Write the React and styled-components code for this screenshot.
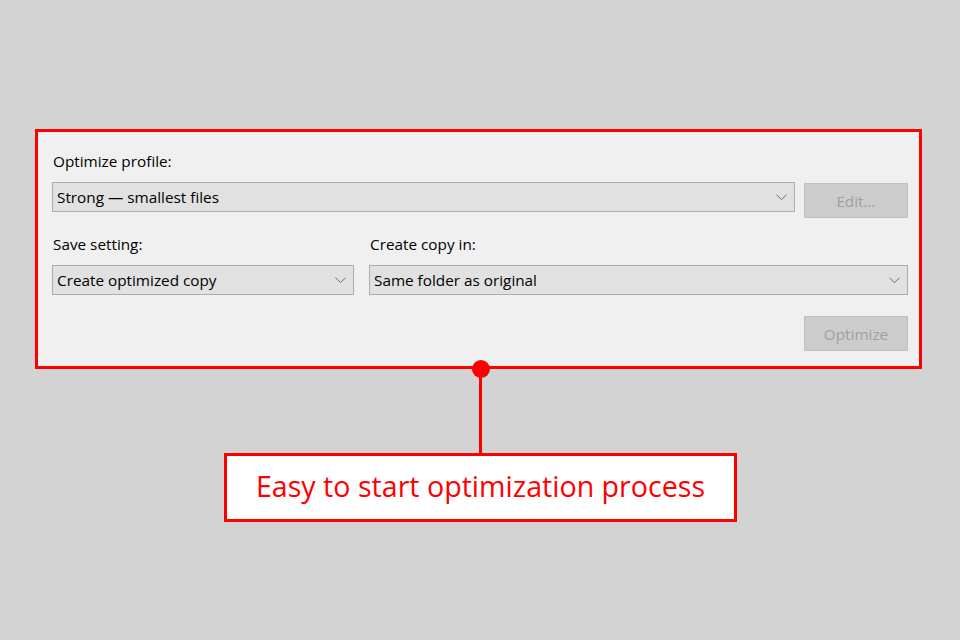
import React from "react";
import styled, { createGlobalStyle } from "styled-components";

const GlobalStyle = createGlobalStyle`
  html, body {
    margin: 0;
    padding: 0;
    background: #d3d3d3;
  }
  * {
    box-sizing: border-box;
  }
`;

const Chevron = () => (
  <svg width="11" height="7" viewBox="0 0 11 7">
    <polyline points="0.5,0.8 5.5,5.6 10.5,0.8" fill="none" stroke="#6a6a6a" strokeWidth="1" />
  </svg>
);

const App = () => {
  return (
    <>
      <GlobalStyle />
      <StyledPage>
        <StyledAnnotated>
          {/* THE DIALOG */}
          <StyledPanel>
            <Label>Optimize profile:</Label>
            <StyledTopRow>
              <Select>
                <span>Strong — smallest files</span>
                <Chevron />
              </Select>
              <Button $offset={1}>Edit...</Button>
            </StyledTopRow>

            <StyledColumns>
              <StyledField>
                <Label>Save setting:</Label>
                <Select>
                  <span>Create optimized copy</span>
                  <Chevron />
                </Select>
              </StyledField>
              <StyledField>
                <Label>Create copy in:</Label>
                <Select>
                  <span>Same folder as original</span>
                  <Chevron />
                </Select>
              </StyledField>
            </StyledColumns>

            <StyledActions>
              <Button>Optimize</Button>
            </StyledActions>

            <Dot />
          </StyledPanel>

          {/* CALLOUT */}
          <StyledCallout>
            <Connector />
            <CalloutBox>Easy to start optimization process</CalloutBox>
          </StyledCallout>
        </StyledAnnotated>
      </StyledPage>
    </>
  );
};

// STYLED COMPONENTS
const StyledPage = styled.div`
  min-height: 640px;
  padding: 129px 0 0 35px;
  display: flex;
  align-items: flex-start;
  font-family: "Open Sans", "Noto Sans", sans-serif;
`;

const StyledAnnotated = styled.div`
  width: 887px;
  display: flex;
  flex-direction: column;
  align-items: center;
`;

const StyledPanel = styled.div`
  position: relative;
  width: 100%;
  background: #f0f0f0;
  border: 3px solid #ff0000;
  padding: 19px 11px 15px 14px;
`;

const Label = styled.div`
  font-size: 15.3px;
  line-height: 20px;
  color: #000;
  margin-bottom: 11px;
  padding-left: 1px;
`;

const StyledTopRow = styled.div`
  display: flex;
  align-items: flex-start;
  gap: 9px;
  height: 36px;
  margin-bottom: 16px;
`;

const Select = styled.div`
  flex: 1 1 auto;
  height: 30px;
  display: flex;
  align-items: center;
  justify-content: space-between;
  padding: 0 7px 0 4px;
  background: #e1e1e1;
  border: 1px solid #adadad;
  font-size: 15.3px;
  color: #000;
  svg {
    flex-shrink: 0;
  }
`;

const Button = styled.div`
  width: 104px;
  height: 35px;
  flex-shrink: 0;
  margin-top: ${(p) => p.$offset || 0}px;
  display: flex;
  align-items: center;
  justify-content: center;
  background: #cccccc;
  border: 1px solid #bfbfbf;
  color: #a0a0a0;
  font-size: 15.3px;
`;

const StyledColumns = styled.div`
  display: grid;
  grid-template-columns: 302px 1fr;
  gap: 15px;
`;

const StyledField = styled.div`
  display: flex;
  flex-direction: column;
`;

const StyledActions = styled.div`
  display: flex;
  justify-content: flex-end;
  margin-top: 21px;
`;

const Dot = styled.div`
  position: absolute;
  left: calc(50% + 2px);
  bottom: -12px;
  width: 18px;
  height: 18px;
  border-radius: 50%;
  background: #ff0000;
  transform: translateX(-50%);
`;

const StyledCallout = styled.div`
  display: flex;
  flex-direction: column;
  align-items: center;
  padding-left: 4px;
`;

const Connector = styled.div`
  width: 3px;
  height: 84px;
  background: #ff0000;
`;

const CalloutBox = styled.div`
  width: 513px;
  height: 69px;
  display: flex;
  align-items: center;
  justify-content: center;
  padding-bottom: 4px;
  background: #fff;
  border: 3px solid #ff0000;
  color: #ff0000;
  font-size: 28.6px;
`;

export default App;
